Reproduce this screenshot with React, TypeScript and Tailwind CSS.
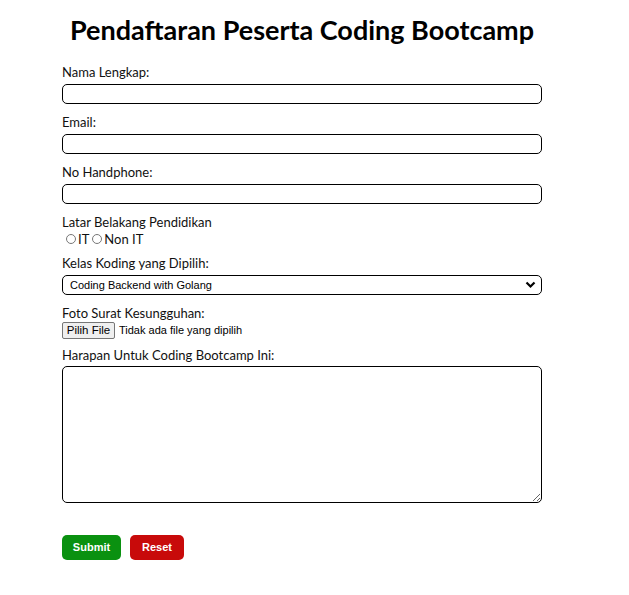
import React from 'react';

const labelCls = 'block text-[13px] leading-[18px] text-[#111]';
const inputCls =
  'block w-full h-[20px] rounded-[5px] border border-black bg-white px-1 text-[13px] outline-none';

const Field: React.FC<{ label: string; children: React.ReactNode }> = ({ label, children }) => (
  <div className="mb-[9px]">
    <label className={labelCls + ' mb-[3px]'}>{label}</label>
    {children}
  </div>
);

const Radio: React.FC<{ text: string }> = ({ text }) => (
  <label className="flex items-center gap-[2px]">
    <span className="w-[10px] h-[10px] rounded-full border border-[#777] bg-white" />
    <span>{text}</span>
  </label>
);

export default function App() {
  return (
    <div className="min-h-[595px] bg-white pb-8" style={{ fontFamily: 'Lato, "Open Sans", sans-serif' }}>
      <div className="ml-[62px] w-[480px]">
        <h1 className="whitespace-nowrap pt-[13px] text-center text-[27px] font-bold leading-[34px] text-black">
          Pendaftaran Peserta Coding Bootcamp
        </h1>
        <form className="mt-[16px]" onSubmit={(e) => e.preventDefault()}>
          <Field label="Nama Lengkap:">
            <input type="text" className={inputCls} />
          </Field>
          <Field label="Email:">
            <input type="email" className={inputCls} />
          </Field>
          <Field label="No Handphone:">
            <input type="tel" className={inputCls} />
          </Field>
          <div className="mb-[7px]">
            <span className={labelCls}>Latar Belakang Pendidikan</span>
            <div className="flex items-center gap-[3px] pl-[4px] text-[13px] leading-[16px] text-[#111]">
              <Radio text="IT" />
              <Radio text="Non IT" />
            </div>
          </div>
          <Field label="Kelas Koding yang Dipilih:">
            <div className="flex h-[20px] w-full items-center justify-between rounded-[5px] border border-black bg-white pl-[7px] pr-[5px]">
              <span className="text-[11px] text-black" style={{ fontFamily: '"Liberation Sans", Arial, sans-serif' }}>
                Coding Backend with Golang
              </span>
              <svg width="11" height="8" viewBox="0 0 11 8">
                <path d="M1.5 1.5 L5.5 5.5 L9.5 1.5" fill="none" stroke="#000" strokeWidth="2.2" />
              </svg>
            </div>
          </Field>
          <div className="mb-[7px]">
            <span className={labelCls}>Foto Surat Kesungguhan:</span>
            <div
              className="flex items-center gap-[4px] text-[11px] text-black"
              style={{ fontFamily: '"Liberation Sans", Arial, sans-serif' }}
            >
              <button
                type="button"
                className="h-[17px] w-[53px] rounded-[2px] border border-[#767676] bg-[#efefef] text-[11.5px] leading-[15px]"
              >
                Pilih File
              </button>
              <span>Tidak ada file yang dipilih</span>
            </div>
          </div>
          <div>
            <label className={labelCls + ' mb-[2px]'}>Harapan Untuk Coding Bootcamp Ini:</label>
            <textarea className="block h-[137px] w-full rounded-[5px] border border-black bg-white p-1 text-[13px] outline-none" />
          </div>
          <div className="mt-[32px] flex gap-[9px]">
            <button
              type="submit"
              className="h-[25px] w-[59px] rounded-[5px] bg-[#0a9110] text-[11px] font-bold text-white"
              style={{ fontFamily: '"Liberation Sans", Arial, sans-serif' }}
            >
              Submit
            </button>
            <button
              type="reset"
              className="h-[25px] w-[54px] rounded-[5px] bg-[#c80a0a] text-[11px] font-bold text-white"
              style={{ fontFamily: '"Liberation Sans", Arial, sans-serif' }}
            >
              Reset
            </button>
          </div>
        </form>
      </div>
    </div>
  );
}
